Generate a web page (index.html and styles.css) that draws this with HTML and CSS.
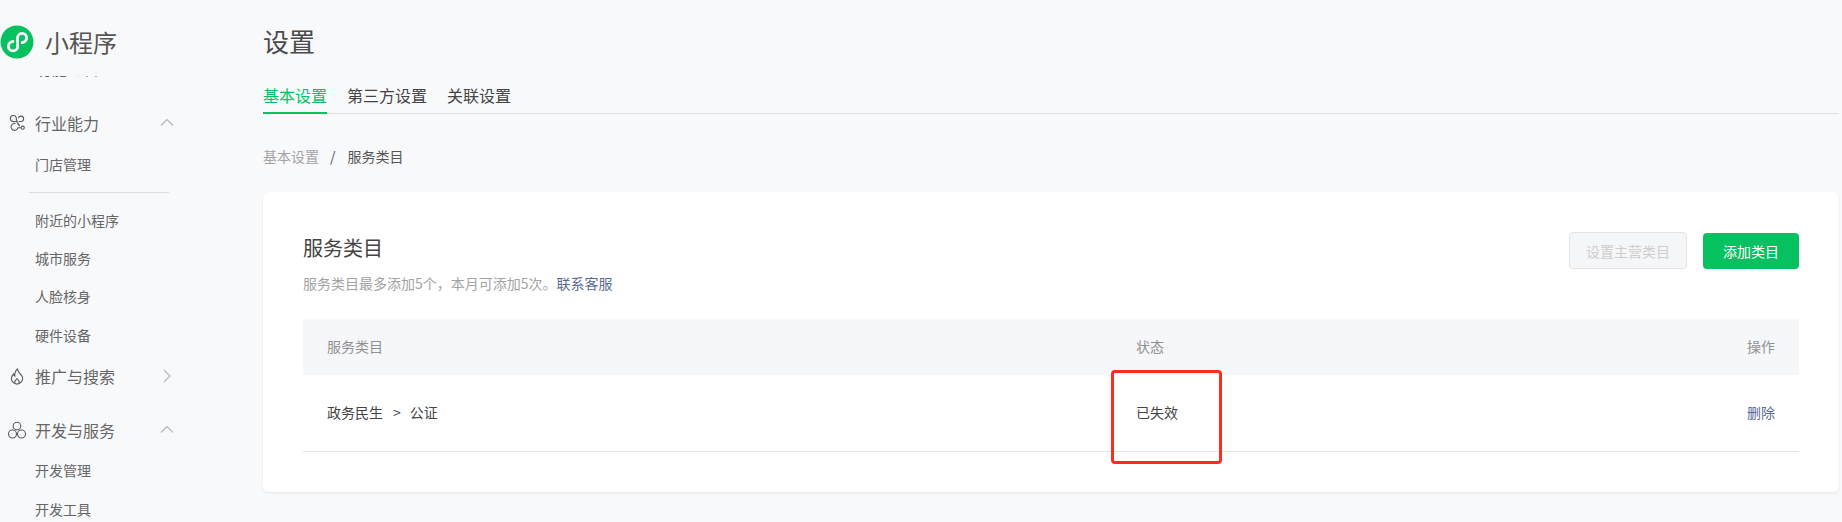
FILE: index.html
```html
<!DOCTYPE html>
<html lang="zh-CN">
<head>
  <meta charset="UTF-8" />
  <title>设置 - 小程序</title>
  <link rel="stylesheet" href="styles.css">
</head>
<body>

  <aside class="sidebar">
    <div class="brand">
      <svg class="brand-logo" viewBox="0 0 34 34">
        <circle cx="17" cy="17" r="16.500" fill="#07c160" />
        <path d="M13 16.500c-2.500.3-4.600 2.300-4.600 4.700a4.600 4.600 0 0 0 9.200 0v-8.400a4.500 4.500 0 0 1 9 0c0 2.400-1.900 4.400-4.300 4.700" fill="none" stroke="#fff" stroke-width="2.800" stroke-linecap="round" />
      </svg>
      <span class="brand-name">小程序</span>
    </div>

    <nav class="nav">
      <div class="nav-clipped">
        <div class="nav-head">
          <svg class="nav-icon" viewBox="0 0 20 20"><circle cx="10" cy="10" r="7" /></svg>
          <span>功能与管理</span>
        </div>
      </div>

      <div class="nav-group">
        <div class="nav-head">
          <svg class="nav-icon" viewBox="0 0 20 20">
            <path d="M9.500 8.500H6.300a3 3 0 1 1 3-3.300c0 3 1.700 6 3.500 8" />
            <path d="M8.500 10.500a3.500 3.500 0 1 0 2.500 4.200h3" />
            <path d="M11.500 8.500h2.700a2.700 2.700 0 1 0-2.900-3.300" />
            <circle cx="15.700" cy="14.700" r="1.600" />
          </svg>
          <span>行业能力</span>
          <svg class="nav-arrow" viewBox="0 0 14 8"><path d="M1 7.500L7 1.500l6 6" /></svg>
        </div>
        <a class="nav-item">门店管理</a>
        <div class="nav-divider"></div>
        <a class="nav-item">附近的小程序</a>
        <a class="nav-item">城市服务</a>
        <a class="nav-item">人脸核身</a>
        <a class="nav-item">硬件设备</a>
      </div>

      <div class="nav-group nav-group-closed">
        <div class="nav-head">
          <svg class="nav-icon" viewBox="0 0 20 20">
            <path d="M10.500 3c.4 2.500 1.300 3.600 2.800 5 1.400 1.300 2.300 2.700 2.300 4.500a5.600 5.600 0 0 1-11.200 0c0-2.200 1-3.500 2.100-4.700.2 1 .6 1.700 1.300 2.200C7.600 7.300 8.600 4.600 10.500 3z" />
            <path d="M7.800 17c-.3-1.600.7-3 2.200-4.300 1.500 1.300 2.500 2.700 2.200 4.300" />
          </svg>
          <span>推广与搜索</span>
          <svg class="nav-arrow nav-arrow-right" viewBox="0 0 8 14"><path d="M1 1l6 6-6 6" /></svg>
        </div>
      </div>

      <div class="nav-group">
        <div class="nav-head">
          <svg class="nav-icon" viewBox="0 0 20 20">
            <circle cx="10" cy="6" r="3.800" />
            <circle cx="5.500" cy="14" r="4" />
            <circle cx="14.500" cy="14" r="4" />
          </svg>
          <span>开发与服务</span>
          <svg class="nav-arrow" viewBox="0 0 14 8"><path d="M1 7.500L7 1.500l6 6" /></svg>
        </div>
        <a class="nav-item">开发管理</a>
        <a class="nav-item">开发工具</a>
      </div>
    </nav>
  </aside>

  <main class="main">
    <h1 class="page-title">设置</h1>

    <div class="tabs">
      <a class="tab tab-active">基本设置</a>
      <a class="tab">第三方设置</a>
      <a class="tab">关联设置</a>
    </div>

    <div class="crumbs">
      <span class="crumb-link">基本设置</span>
      <span class="crumb-sep">/</span>
      <span>服务类目</span>
    </div>

    <section class="card">
      <div class="card-head">
        <div>
          <h2 class="card-title">服务类目</h2>
          <p class="card-desc">服务类目最多添加5个，本月可添加5次。<a class="link">联系客服</a></p>
        </div>
        <div class="card-actions">
          <button class="btn btn-disabled">设置主营类目</button>
          <button class="btn btn-primary">添加类目</button>
        </div>
      </div>

      <div class="table">
        <div class="row row-head">
          <div class="col-name">服务类目</div>
          <div class="col-status">状态</div>
          <div class="col-op">操作</div>
        </div>
        <div class="row">
          <div class="col-name">政务民生<span class="path-sep">&gt;</span>公证</div>
          <div class="col-status">已失效</div>
          <div class="col-op"><a class="link">删除</a></div>
        </div>
      </div>

      <!-- 截图上的红框标注 -->
      <div class="mark"></div>
    </section>
  </main>

</body>
</html>
```

FILE: styles.css
```css
* {
  margin: 0;
  padding: 0;
  box-sizing: border-box;
}

html, body {
  height: 100%;
  overflow: hidden;
}

body {
  display: flex;
  background: #f8f9fb;
  color: #444;
  font-family: "Noto Sans CJK SC", "Noto Sans", sans-serif;
  font-size: 14px;
}

/* 侧边栏 */
.sidebar {
  width: 263px;
  flex-shrink: 0;
  height: 522px;
  overflow: hidden;
}

.brand {
  display: flex;
  align-items: center;
  height: 76px;
  padding-top: 7px;
  gap: 11px;
}

.brand-logo {
  width: 34px;
  height: 34px;
}

.brand-name {
  font-size: 24px;
  line-height: 34px;
  color: #555;
}

.nav {
  height: 446px;
  overflow: hidden;
  color: #666;
}

.nav-clipped {
  height: 2px;
  overflow: hidden;
  display: flex;
  flex-direction: column;
  justify-content: flex-end;
  margin-bottom: 26px;
}

.nav-clipped .nav-head {
  height: 20px;
  margin-bottom: 0;
  line-height: 20px;
}

.nav-group-closed {
  margin-top: 3px;
  margin-bottom: 16px;
}

.nav-head {
  display: flex;
  align-items: center;
  height: 38px;
  padding-left: 7px;
  margin-bottom: 2.500px;
  font-size: 16px;
  line-height: 38px;
  flex-shrink: 0;
  position: relative;
}

.nav-icon {
  width: 20px;
  height: 20px;
  margin-right: 8px;
  fill: none;
  stroke: #5b5b5b;
  stroke-width: 1.100;
}

.nav-arrow {
  position: absolute;
  left: 160px;
  top: 14px;
  width: 14px;
  height: 8px;
  fill: none;
  stroke: #b8b8b8;
  stroke-width: 1.200;
}

.nav-arrow-right {
  left: 163px;
  top: 12px;
  width: 8px;
  height: 14px;
}

.nav-item {
  display: block;
  height: 38.300px;
  line-height: 38px;
  padding-left: 35px;
  font-size: 14px;
  color: #666;
}

.nav-divider {
  width: 140px;
  height: 1px;
  margin: 9px 0 8px 29px;
  background: #dcdde0;
}

/* 主内容 */
.main {
  flex: 1;
  min-width: 0;
  padding-right: 3px;
}

.page-title {
  margin-top: 22px;
  font-size: 26px;
  font-weight: 400;
  line-height: 38px;
  color: #4a4a4a;
}

.tabs {
  display: flex;
  gap: 20px;
  margin-top: 23px;
  height: 31px;
  border-bottom: 1px solid #e0e1e5;
}

.tab {
  height: 31px;
  font-size: 16px;
  line-height: 24px;
  color: #444;
}

.tab-active {
  color: #07c160;
  border-bottom: 2px solid #07c160;
}

.crumbs {
  display: flex;
  align-items: center;
  height: 20px;
  margin-top: 32px;
  font-size: 14px;
  color: #555;
}

.crumb-link {
  color: #a3a3a3;
}

.crumb-sep {
  margin: 0 12px 0 11px;
}

.card {
  position: relative;
  height: 300px;
  margin-top: 26px;
  padding: 0 40px;
  background: #fff;
  border-radius: 6px;
  box-shadow: 0 1px 3px rgba(0, 0, 0, 0.08);
}

.card-head {
  display: flex;
  justify-content: space-between;
  height: 127px;
  padding-top: 41px;
}

.card-title {
  font-size: 20px;
  font-weight: 400;
  line-height: 30px;
  color: #444;
}

.card-desc {
  margin-top: 10px;
  font-size: 14px;
  line-height: 20px;
  color: #a3a3a3;
}

.link {
  color: #576b95;
}

.card-actions {
  display: flex;
  align-items: flex-end;
  gap: 16px;
  margin-top: -1px;
  height: 37px;
}

.btn {
  font-family: inherit;
  font-size: 14px;
  border-radius: 4px;
  border: 1px solid transparent;
}

.btn-disabled {
  width: 118px;
  height: 37px;
  color: #cdcdcd;
  background: #f5f6f8;
  border-color: #e2e3e6;
}

.btn-primary {
  width: 96px;
  height: 36px;
  color: #fff;
  background: #07c160;
}

.table {
  font-size: 14px;
}

.row {
  display: flex;
  align-items: center;
  height: 77px;
  padding: 0 24px 2px;
  border-bottom: 1px solid #e4e4e4;
  color: #444;
}

.row-head {
  height: 56px;
  background: #f6f7f9;
  border-bottom: none;
  color: #919191;
}

.col-name {
  width: 809px;
}

.col-status {
  flex: 1;
}

.col-op {
  text-align: right;
}

.path-sep {
  margin: 0 9px 0 10px;
}

.mark {
  position: absolute;
  left: 848px;
  top: 178px;
  width: 111px;
  height: 94px;
  border: 3px solid #ff2a20;
  border-radius: 4px;
}
```
